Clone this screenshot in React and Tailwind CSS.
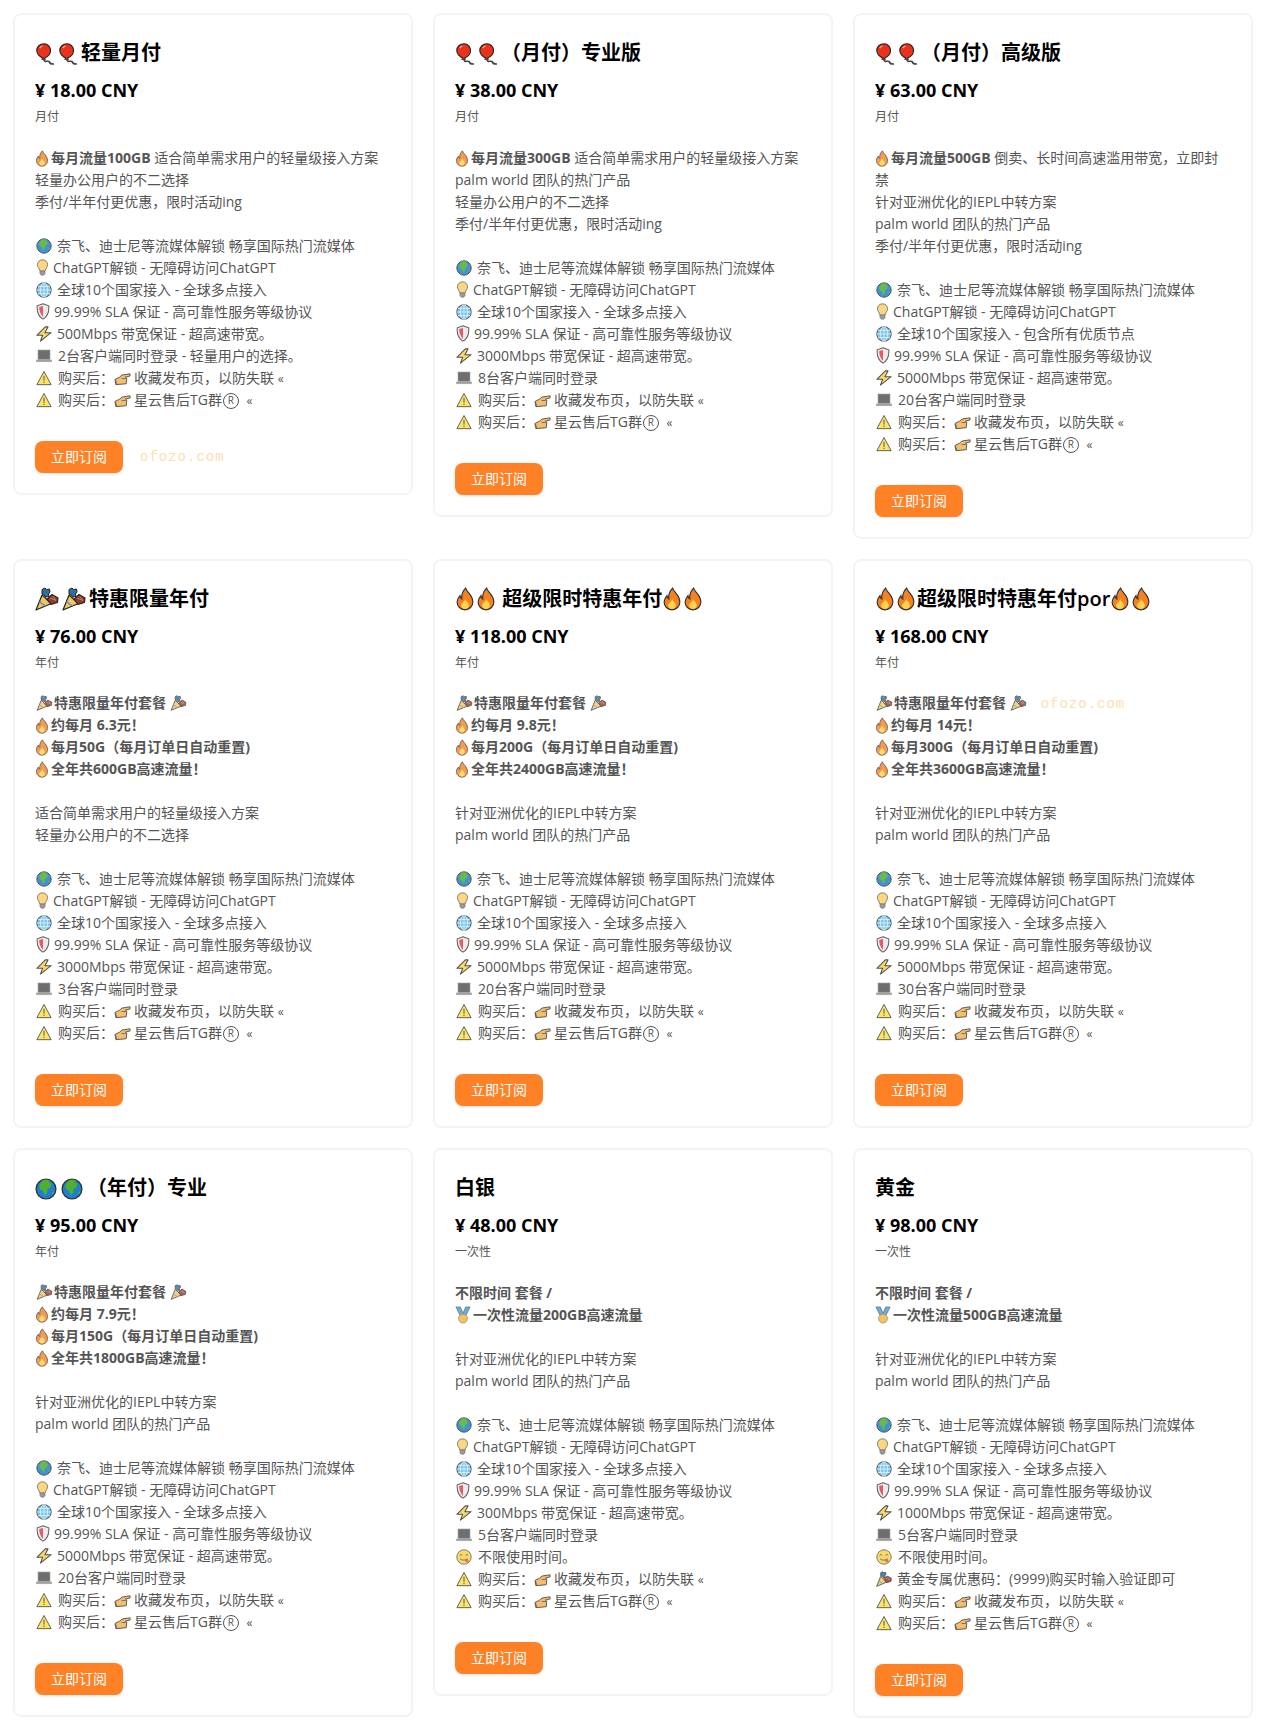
import React from "react";

// emoji drawings, the reference has Segoe-style outlined emoji
const Balloon = ({ className }) => (
  <svg viewBox="0 0 19 22" className={className}>
    <path d="M8 .8C3.800.8.800 3.800.800 7.500c0 3.600 3.200 6.500 5.800 7.400l-.6 1.300h3.200l-.5-1.300c2.800-1 5.800-3.800 5.800-7.400C14.500 3.800 12 .8 8 .8z" fill="#e8321c" stroke="#222" strokeWidth="1.100" />
    <path d="M8 16.500c0 3.200 3.500 1 5 2 1.500 1.100-.4 2.800 5 2.500" fill="none" stroke="#444" strokeWidth="1.700" />
    <path d="M3.800 5.200c.7-1.100 1.500-1.700 2.700-2" fill="none" stroke="#ffa08c" strokeWidth="1.300" />
  </svg>
);

const Fire = ({ className }) => (
  <svg viewBox="0 0 16 20" className={className}>
    <path d="M8.500 1c.6 3.200 5.800 5.500 6 11 .2 4.200-3 7-6.500 7s-6.800-2.800-6.500-6.800c.1-2.200 1.200-3.700 2.300-5 .1 1.400.6 2.300 1.500 2.800C5 6.500 6 3.500 8.500 1z" fill="#f5811f" stroke="#333" strokeWidth="1" />
    <path d="M8.200 10c.3 1.800 3 2.700 3 5.400 0 1.800-1.500 3-3.200 3s-3.200-1.200-3.200-3c0-2 2.800-3 3.400-5.400z" fill="#fcd34d" />
  </svg>
);

const Popper = ({ className }) => (
  <svg viewBox="0 0 24 24" className={className}>
    <path d="M1 23 7 8l9.500 8.500z" fill="#f7c45c" stroke="#222" strokeWidth="1.200" strokeLinejoin="round" />
    <path d="M4.500 14.500c2.200 2.200 4 3.600 6.500 4.500" fill="none" stroke="#4a97cc" strokeWidth="1.400" />
    <path d="M7 2.500 10 1l1.500 1.500L14.500 2l.5 3-1.500 2 .5 2.500-3 .5-2-2-2-1z" fill="#2d6f9e" stroke="#222" strokeWidth="1" strokeLinejoin="round" />
    <path d="M12 12.500l5-5 6 3.500-.5 4.500-6.500 2z" fill="#8a3b2a" stroke="#222" strokeWidth="1.100" strokeLinejoin="round" />
    <path d="M15 11l6 2.500M17.500 9l3 3.500" stroke="#d9886f" strokeWidth=".9" />
  </svg>
);

const Globe = ({ className }) => (
  <svg viewBox="0 0 20 20" className={className}>
    <circle cx="10" cy="10" r="9" fill="#1e7fd0" stroke="#333" strokeWidth="1.200" />
    <path d="M7 2c2-.6 5-.6 6.500.4l-1 1.600 2.500 1-1 3.500-2.500 1.500-.5 3.500-2 2.500-1.500-4-3-2-.5-3.500z" fill="#4eb02c" />
    <path d="M15.500 13l1.500-1 .5 1.500-1.500 1.500z" fill="#4eb02c" />
  </svg>
);

const Meridians = ({ className }) => (
  <svg viewBox="0 0 20 20" className={className}>
    <circle cx="10" cy="10" r="9" fill="#62bcec" stroke="#444" strokeWidth="1.300" />
    <path d="M10 1v18M1 10h18M2.500 5.500h15M2.500 14.500h15" stroke="#dff3fc" strokeWidth="1" />
    <ellipse cx="10" cy="10" rx="4.500" ry="9" fill="none" stroke="#dff3fc" strokeWidth="1" />
  </svg>
);

const Bulb = ({ className }) => (
  <svg viewBox="0 0 14 20" className={className}>
    <path d="M7 1C3.500 1 1 3.600 1 6.700c0 2.800 2.400 4.200 2.800 7.300h6.400C10.600 10.900 13 9.500 13 6.700 13 3.600 10.500 1 7 1z" fill="#fcd06a" stroke="#555" strokeWidth="1" />
    <path d="M4 14.500h6v2.500l-1.500 2h-3L4 17z" fill="#8b8b8b" stroke="#555" strokeWidth=".7" />
  </svg>
);

const Shield = ({ className }) => (
  <svg viewBox="0 0 16 20" className={className}>
    <path d="M8 1 14.800 3.300c.5 6.500-1.500 12.500-6.800 15.700C2.700 15.800.700 9.800 1.200 3.300z" fill="#e8e8e8" stroke="#444" strokeWidth="1.200" />
    <path d="M8 3.500 3.500 4.800C3.400 9 5 13.500 8 16.500z" fill="#e23f4c" />
  </svg>
);

const Bolt = ({ className }) => (
  <svg viewBox="0 0 18 18" className={className}>
    <path d="M10.500 1 1 10.500h6.500L5 17l12-9.500h-7l3.500-6.500z" fill="#fcd34d" stroke="#333" strokeWidth="1.200" strokeLinejoin="round" />
  </svg>
);

const Laptop = ({ className }) => (
  <svg viewBox="0 0 18 16" className={className}>
    <rect x="2.500" y="1.500" width="13" height="10" fill="#555" stroke="#666" strokeWidth="1" />
    <path d="M.500 12.500h17v1.800H.500z" fill="#999" stroke="#777" strokeWidth=".6" />
  </svg>
);

const Warning = ({ className }) => (
  <svg viewBox="0 0 18 17" className={className}>
    <path d="M9 1.200 17 16H1z" fill="#fde047" stroke="#444" strokeWidth="1.100" strokeLinejoin="round" />
    <path d="M9 6v5.500M9 12.800v1.400" stroke="#444" strokeWidth="1.200" />
  </svg>
);

const Point = ({ className }) => (
  <svg viewBox="0 0 18 14" className={className}>
    <path d="M1 7.500 6 5l2.500-2.200L17 1.500v2.300l-5 1.200 1.500 1-.5 6L2 13z" fill="#f4b860" stroke="#444" strokeWidth="1" strokeLinejoin="round" />
    <path d="M8 6.500h4.500M1.500 8 3 12.500" fill="none" stroke="#444" strokeWidth=".8" />
  </svg>
);

const Medal = ({ className }) => (
  <svg viewBox="0 0 18 20" className={className}>
    <path d="M1 1h5l3 7 3-7h5l-5 10H6z" fill="#4aa3df" stroke="#555" strokeWidth=".8" />
    <circle cx="9" cy="14" r="5" fill="#f5b83d" stroke="#777" strokeWidth=".8" />
  </svg>
);

const Yum = ({ className }) => (
  <svg viewBox="0 0 20 20" className={className}>
    <circle cx="10" cy="10" r="9" fill="#fcd34d" stroke="#555" strokeWidth="1.100" />
    <path d="M4.500 8c1-1.300 2.300-1.300 3.300 0M12 8c1-1.300 2.300-1.300 3.300 0" fill="none" stroke="#444" strokeWidth="1.100" />
    <path d="M5 12c2 2.500 7 2.500 10 0" fill="none" stroke="#444" strokeWidth="1.100" />
    <path d="M11.500 13.500h4v2.500c-1 1.400-3.500 1-4-1z" fill="#e8505b" />
  </svg>
);

const Reg = () => (
  <span className="ml-[1px] inline-flex h-4 w-4 items-center justify-center rounded-full border-[1.500px] border-[#555] align-[1px] text-[10px] leading-[13px]">
    R
  </span>
);

const FireLine = ({ children }) => (
  <p className="font-bold">
    <Fire className="mr-[2px] inline-block h-[17px] w-[14px] align-[-4px] opacity-80" />
    {children}
  </p>
);

const Blank = () => <p className="h-[22px]" />;

const Row = ({ icon, gap = "mr-[5px]", children }) => (
  <p className="h-[22px]">
    <span className={`ml-[1px] inline-block align-[-3px] ${gap}`}>{icon}</span>
    {children}
  </p>
);

const i16 = "block h-4 w-4 opacity-85";

const Features = ({ mbps, devices, regions = "全球多点接入", extra }) => (
  <>
    <Row icon={<Globe className={i16} />}>奈飞、迪士尼等流媒体解锁 畅享国际热门流媒体</Row>
    <Row gap="mr-[4px]" icon={<Bulb className="block h-[17px] w-[13px] opacity-85" />}>ChatGPT解锁 - 无障碍访问ChatGPT</Row>
    <Row icon={<Meridians className={i16} />}>全球10个国家接入 - {regions}</Row>
    <Row gap="mr-[4px]" icon={<Shield className="block h-[17px] w-[14px] opacity-85" />}>99.99% SLA 保证 - 高可靠性服务等级协议</Row>
    <Row icon={<Bolt className={i16} />}>{mbps}Mbps 带宽保证 - 超高速带宽。</Row>
    <Row gap="mr-[6px]" icon={<Laptop className={i16} />}>{devices}</Row>
    {extra}
    <Row gap="mr-[6px]" icon={<Warning className={i16} />}>
      购买后：
      <Point className="mr-[3px] inline-block h-[14px] w-[17px] align-[-3px] opacity-90" />
      收藏发布页，以防失联 <span className="text-xs">«</span>
    </Row>
    <Row gap="mr-[6px]" icon={<Warning className={i16} />}>
      购买后：
      <Point className="mr-[3px] inline-block h-[14px] w-[17px] align-[-3px] opacity-90" />
      星云售后TG群<Reg /> <span className="ml-1 text-xs">«</span>
    </Row>
  </>
);

const Watermark = ({ className }) => (
  <span className={`font-['Liberation_Mono',monospace] text-sm tracking-[1px] text-[#fde0b0] ${className}`}>ofozo.com</span>
);

const YearIntro = ({ perMonth, monthly, total, mark }) => (
  <>
    <p className="-mt-[1px] h-[22px] font-bold">
      <Popper className="mr-[1px] ml-[1px] inline-block h-4 w-[17px] align-[-3px] opacity-80" />
      特惠限量年付套餐 <Popper className="inline-block h-4 w-[17px] align-[-3px] opacity-80" />
      {mark && <Watermark className="ml-[14px] font-normal" />}
    </p>
    <FireLine>约每月 {perMonth}元！</FireLine>
    <FireLine>每月{monthly}G（每月订单日自动重置)</FireLine>
    <FireLine>全年共{total}GB高速流量！</FireLine>
  </>
);

const Iepl = () => (
  <>
    <p>针对亚洲优化的IEPL中转方案</p>
    <p>palm world 团队的热门产品</p>
  </>
);

const OneTime = ({ gb }) => (
  <>
    <p className="font-bold">不限时间 套餐 /</p>
    <p className="font-bold h-[22px]">
      <Medal className="mr-[2px] inline-block h-[18px] w-4 align-[-4px] opacity-85" />
      一次性流量{gb}GB高速流量
    </p>
  </>
);

const YumRow = () => (
  <Row gap="mr-[6px]" icon={<Yum className={i16} />}>不限使用时间。</Row>
);

const balloon = <Balloon className="mr-[3px] ml-[1px] inline-block h-[22px] w-[19px] align-[-5px]" />;
const popper = <Popper className="mr-[3px] inline-block h-6 w-6 align-[-5px]" />;
const fire = <Fire className="mr-[1px] inline-block h-6 w-5 align-[-5px]" />;
const globe = <Globe className="mr-[4px] inline-block h-[22px] w-[22px] align-[-5px]" />;

const descFire = <Fire className="mr-[2px] inline-block h-[17px] w-[14px] align-[-4px] opacity-80" />;

const Card = ({ title, price, period, mark, children }) => (
  <div className="rounded-lg border-2 border-[#f4f4f5] bg-white p-5">
    <h3 className="mt-[4px] h-7 text-xl leading-7 font-semibold text-black">{title}</h3>
    <div className="mt-[9px] text-lg leading-7 font-bold text-black">¥ {price} CNY</div>
    <div className="mt-[3px] text-xs leading-[20px] text-[#555]">{period}</div>
    <div className="mt-5 text-sm leading-[22px] text-[#555]">{children}</div>
    <div className="mt-[30px] flex items-center">
      <button className="h-8 w-[88px] rounded-lg bg-[#ff8125] text-sm text-white shadow-sm">立即订阅</button>
      {mark && <Watermark className="ml-[17px]" />}
    </div>
  </div>
);

export default function App() {
  return (
    <div className="grid grid-cols-3 items-start gap-5 bg-white px-[13px] pt-[13px] pb-4 font-['Open_Sans','Noto_Sans_CJK_SC',sans-serif]">
      <Card title={<>{balloon}{balloon}轻量月付</>} price="18.00" period="月付" mark>
        <p>
          <span className="font-bold">{descFire}每月流量100GB</span>{" "}
          适合简单需求用户的轻量级接入方案
        </p>
        <p>轻量办公用户的不二选择</p>
        <p>季付/半年付更优惠，限时活动ing</p>
        <Blank />
        <Features mbps="500" devices="2台客户端同时登录 - 轻量用户的选择。" />
      </Card>

      <Card title={<>{balloon}{balloon}（月付）专业版</>} price="38.00" period="月付">
        <p>
          <span className="font-bold">{descFire}每月流量300GB</span>{" "}
          适合简单需求用户的轻量级接入方案
        </p>
        <p>palm world 团队的热门产品</p>
        <p>轻量办公用户的不二选择</p>
        <p>季付/半年付更优惠，限时活动ing</p>
        <Blank />
        <Features mbps="3000" devices="8台客户端同时登录" />
      </Card>

      <Card title={<>{balloon}{balloon}（月付）高级版</>} price="63.00" period="月付">
        <p>
          <span className="font-bold">{descFire}每月流量500GB</span>{" "}
          倒卖、长时间高速滥用带宽，立即封禁
        </p>
        <p>针对亚洲优化的IEPL中转方案</p>
        <p>palm world 团队的热门产品</p>
        <p>季付/半年付更优惠，限时活动ing</p>
        <Blank />
        <Features mbps="5000" devices="20台客户端同时登录" regions="包含所有优质节点" />
      </Card>

      <Card title={<>{popper}{popper}特惠限量年付</>} price="76.00" period="年付">
        <YearIntro perMonth="6.3" monthly="50" total="600" />
        <Blank />
        <p>适合简单需求用户的轻量级接入方案</p>
        <p>轻量办公用户的不二选择</p>
        <Blank />
        <Features mbps="3000" devices="3台客户端同时登录" />
      </Card>

      <Card title={<>{fire}{fire} 超级限时特惠年付{fire}{fire}</>} price="118.00" period="年付">
        <YearIntro perMonth="9.8" monthly="200" total="2400" />
        <Blank />
        <Iepl />
        <Blank />
        <Features mbps="5000" devices="20台客户端同时登录" />
      </Card>

      <Card title={<>{fire}{fire}超级限时特惠年付por{fire}{fire}</>} price="168.00" period="年付">
        <YearIntro perMonth="14" monthly="300" total="3600" mark />
        <Blank />
        <Iepl />
        <Blank />
        <Features mbps="5000" devices="30台客户端同时登录" />
      </Card>

      <Card title={<>{globe}{globe}（年付）专业</>} price="95.00" period="年付">
        <YearIntro perMonth="7.9" monthly="150" total="1800" />
        <Blank />
        <Iepl />
        <Blank />
        <Features mbps="5000" devices="20台客户端同时登录" />
      </Card>

      <Card title="白银" price="48.00" period="一次性">
        <OneTime gb="200" />
        <Blank />
        <Iepl />
        <Blank />
        <Features mbps="300" devices="5台客户端同时登录" extra={<YumRow />} />
      </Card>

      <Card title="黄金" price="98.00" period="一次性">
        <OneTime gb="500" />
        <Blank />
        <Iepl />
        <Blank />
        <Features
          mbps="1000"
          devices="5台客户端同时登录"
          extra={
            <>
              <YumRow />
              <Row gap="mr-[5px]" icon={<Popper className={i16} />}>黄金专属优惠码：(9999)购买时输入验证即可</Row>
            </>
          }
        />
      </Card>
    </div>
  );
}
